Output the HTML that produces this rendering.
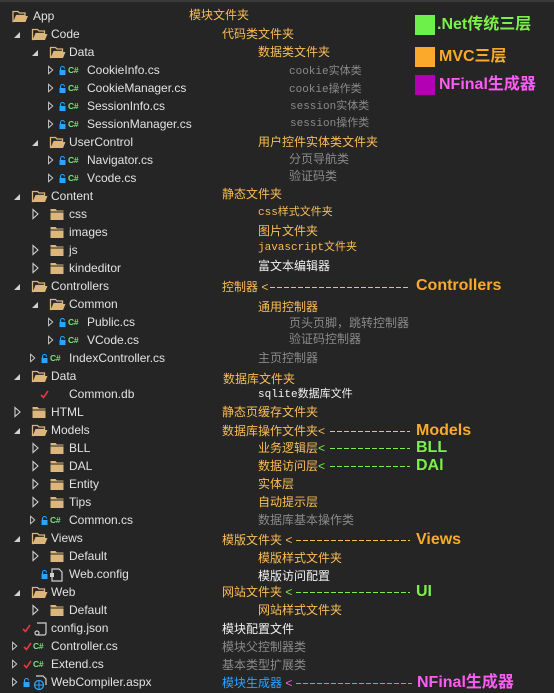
<!DOCTYPE html>
<html><head><meta charset="utf-8">
<style>
html,body{margin:0;padding:0}
body{width:554px;height:693px;background:#252526;position:relative;overflow:hidden;font-family:"Liberation Sans","Noto Sans CJK SC",sans-serif;border-top:2px solid #3a3a3c;box-sizing:border-box}
.r{position:absolute;height:18px;line-height:18px;display:flex;align-items:center;color:#e2e2e2;font-size:12px;white-space:nowrap}
.ex{width:18px;height:18px;position:relative;flex:none}
.ex:after{content:"";position:absolute;left:3px;top:7px;border-left:6px solid transparent;border-bottom:6px solid #d0d0d0}
.co{width:21px;height:18px;flex:none}
.co12{width:15px;height:18px;flex:none}
.sp{flex:none}
.fd{width:22px;height:18px;flex:none}
.lk{width:7px;height:18px;flex:none}
.cs{width:21px;height:18px;flex:none;color:#7ee07e;font-size:8.5px;font-weight:bold;line-height:18px;letter-spacing:-0.3px}
.a{position:absolute;font-size:12px;line-height:16px;white-space:nowrap;color:#fbbd55;font-family:"Liberation Sans","WenQuanYi Zen Hei",sans-serif}
.g{color:#8a8a8a}.w{color:#f2f2f2}.b{color:#2ba3ff}
.m{font-family:"Liberation Mono","WenQuanYi Zen Hei",monospace;font-size:11px}
.dash{position:absolute;height:1px}
.big{position:absolute;font-weight:bold;font-size:16px;line-height:18px;font-family:"Liberation Sans","Noto Sans CJK SC",sans-serif}
.sq{position:absolute;width:20px;height:20px}
</style></head><body>
<svg width="0" height="0" style="position:absolute">
<defs>
<symbol id="fo" viewBox="0 0 19 18"><path d="M2 4.5h5l1.5 1.5H14v2.5H5.5L3 14.5H2z" fill="none" stroke="#dcb67a" stroke-width="1.3"/><path d="M5 9h12l-2.5 6H2.5z" fill="#dcb67a"/></symbol>
<symbol id="fc" viewBox="0 0 19 18"><path d="M2 4h5l1.5 1.5H15V15H2z" fill="#dcb67a"/><path d="M2 7h13" stroke="#252526"/></symbol>
<symbol id="tr" viewBox="0 0 18 18"><path d="M5.5 4.5L10.5 9L5.5 13.5z" fill="none" stroke="#d0d0d0" stroke-width="1.1"/></symbol>
<symbol id="lk" viewBox="0 0 7 18"><path d="M1.5 9V7.5a2 2 0 0 1 4 0" fill="none" stroke="#2ba3ff" stroke-width="1.1"/><rect x="0.5" y="9" width="6" height="5" fill="#2ba3ff"/></symbol>
<symbol id="ck" viewBox="0 0 10 18"><path d="M1 10l2.5 2.5L8 6" fill="none" stroke="#e23b3b" stroke-width="1.6"/></symbol>
</defs></svg>

<!-- tree -->
<div class="r" style="top:5px;left:11px"><svg style="width:19px;height:18px"><use href="#fo"/></svg><span class="sp" style="width:3px"></span>App</div>
<div class="r" style="top:23px;left:11px"><span class="ex"></span><svg class="fd"><use href="#fo"/></svg>Code</div>
<div class="r" style="top:41px;left:29px"><span class="ex"></span><svg class="fd"><use href="#fo"/></svg>Data</div>
<div class="r" style="top:59px;left:44px"><svg class="co12"><use href="#tr"/></svg><svg class="lk"><use href="#lk"/></svg><span class="cs">&nbsp;C#</span>CookieInfo.cs</div>
<div class="r" style="top:77px;left:44px"><svg class="co12"><use href="#tr"/></svg><svg class="lk"><use href="#lk"/></svg><span class="cs">&nbsp;C#</span>CookieManager.cs</div>
<div class="r" style="top:95px;left:44px"><svg class="co12"><use href="#tr"/></svg><svg class="lk"><use href="#lk"/></svg><span class="cs">&nbsp;C#</span>SessionInfo.cs</div>
<div class="r" style="top:113px;left:44px"><svg class="co12"><use href="#tr"/></svg><svg class="lk"><use href="#lk"/></svg><span class="cs">&nbsp;C#</span>SessionManager.cs</div>
<div class="r" style="top:131px;left:29px"><span class="ex"></span><svg class="fd"><use href="#fo"/></svg>UserControl</div>
<div class="r" style="top:149px;left:44px"><svg class="co12"><use href="#tr"/></svg><svg class="lk"><use href="#lk"/></svg><span class="cs">&nbsp;C#</span>Navigator.cs</div>
<div class="r" style="top:167px;left:44px"><svg class="co12"><use href="#tr"/></svg><svg class="lk"><use href="#lk"/></svg><span class="cs">&nbsp;C#</span>Vcode.cs</div>
<div class="r" style="top:185px;left:11px"><span class="ex"></span><svg class="fd"><use href="#fo"/></svg>Content</div>
<div class="r" style="top:203px;left:26px"><svg class="co"><use href="#tr"/></svg><svg class="fd"><use href="#fc"/></svg>css</div>
<div class="r" style="top:221px;left:47px"><svg class="fd"><use href="#fc"/></svg>images</div>
<div class="r" style="top:239px;left:26px"><svg class="co"><use href="#tr"/></svg><svg class="fd"><use href="#fc"/></svg>js</div>
<div class="r" style="top:257px;left:26px"><svg class="co"><use href="#tr"/></svg><svg class="fd"><use href="#fc"/></svg>kindeditor</div>
<div class="r" style="top:275px;left:11px"><span class="ex"></span><svg class="fd"><use href="#fo"/></svg>Controllers</div>
<div class="r" style="top:293px;left:29px"><span class="ex"></span><svg class="fd"><use href="#fo"/></svg>Common</div>
<div class="r" style="top:311px;left:44px"><svg class="co12"><use href="#tr"/></svg><svg class="lk"><use href="#lk"/></svg><span class="cs">&nbsp;C#</span>Public.cs</div>
<div class="r" style="top:329px;left:44px"><svg class="co12"><use href="#tr"/></svg><svg class="lk"><use href="#lk"/></svg><span class="cs">&nbsp;C#</span>VCode.cs</div>
<div class="r" style="top:347px;left:26px"><svg class="co12"><use href="#tr"/></svg><svg class="lk"><use href="#lk"/></svg><span class="cs">&nbsp;C#</span>IndexController.cs</div>
<div class="r" style="top:365px;left:11px"><span class="ex"></span><svg class="fd"><use href="#fo"/></svg>Data</div>
<div class="r" style="top:383px;left:40px"><svg style="width:10px;height:18px"><use href="#ck"/></svg><span class="sp" style="width:19px"></span>Common.db</div>
<div class="r" style="top:401px;left:8px"><svg class="co"><use href="#tr"/></svg><svg class="fd"><use href="#fc"/></svg>HTML</div>
<div class="r" style="top:419px;left:11px"><span class="ex"></span><svg class="fd"><use href="#fo"/></svg>Models</div>
<div class="r" style="top:437px;left:26px"><svg class="co"><use href="#tr"/></svg><svg class="fd"><use href="#fc"/></svg>BLL</div>
<div class="r" style="top:455px;left:26px"><svg class="co"><use href="#tr"/></svg><svg class="fd"><use href="#fc"/></svg>DAL</div>
<div class="r" style="top:473px;left:26px"><svg class="co"><use href="#tr"/></svg><svg class="fd"><use href="#fc"/></svg>Entity</div>
<div class="r" style="top:491px;left:26px"><svg class="co"><use href="#tr"/></svg><svg class="fd"><use href="#fc"/></svg>Tips</div>
<div class="r" style="top:509px;left:26px"><svg class="co12"><use href="#tr"/></svg><svg class="lk"><use href="#lk"/></svg><span class="cs">&nbsp;C#</span>Common.cs</div>
<div class="r" style="top:527px;left:11px"><span class="ex"></span><svg class="fd"><use href="#fo"/></svg>Views</div>
<div class="r" style="top:545px;left:26px"><svg class="co"><use href="#tr"/></svg><svg class="fd"><use href="#fc"/></svg>Default</div>
<div class="r" style="top:563px;left:41px"><svg class="lk"><use href="#lk"/></svg><svg style="width:21px;height:18px"><path d="M4 4h7l3 3v9H4z" fill="none" stroke="#d0d0d0" stroke-width="1.2"/><path d="M2 8h4v4H2z" fill="#d0d0d0"/></svg>Web.config</div>
<div class="r" style="top:581px;left:11px"><span class="ex"></span><svg class="fd"><use href="#fo"/></svg>Web</div>
<div class="r" style="top:599px;left:26px"><svg class="co"><use href="#tr"/></svg><svg class="fd"><use href="#fc"/></svg>Default</div>
<div class="r" style="top:617px;left:22px"><svg style="width:10px;height:18px"><use href="#ck"/></svg><svg style="width:19px;height:18px"><path d="M5 4h9v10a2 2 0 0 1-2 2H6" fill="none" stroke="#d0d0d0" stroke-width="1.2"/><circle cx="5" cy="14" r="2" fill="none" stroke="#d0d0d0" stroke-width="1.2"/></svg>config.json</div>
<div class="r" style="top:635px;left:8px"><svg class="co12"><use href="#tr"/></svg><svg style="width:10px;height:18px"><use href="#ck"/></svg><span class="cs" style="width:18px">C#</span>Controller.cs</div>
<div class="r" style="top:653px;left:8px"><svg class="co12"><use href="#tr"/></svg><svg style="width:10px;height:18px"><use href="#ck"/></svg><span class="cs" style="width:18px">C#</span>Extend.cs</div>
<div class="r" style="top:671px;left:8px"><svg class="co12"><use href="#tr"/></svg><svg class="lk"><use href="#lk"/></svg><svg style="width:21px;height:18px"><path d="M6 3h7l3 3v6" fill="none" stroke="#d0d0d0" stroke-width="1.2"/><circle cx="9" cy="12" r="4.5" fill="none" stroke="#2ba3ff" stroke-width="1.3"/><path d="M4.5 12h9M9 7.5v9" stroke="#2ba3ff"/></svg>WebCompiler.aspx</div>

<!-- annotations -->
<div class="a" style="left:189px;top:5px">模块文件夹</div>
<div class="a" style="left:222px;top:24px">代码类文件夹</div>
<div class="a" style="left:258px;top:42px">数据类文件夹</div>
<div class="a g m" style="left:289px;top:62px">cookie实体类</div>
<div class="a g m" style="left:289px;top:80px">cookie操作类</div>
<div class="a g m" style="left:290px;top:97px">session实体类</div>
<div class="a g m" style="left:290px;top:114px">session操作类</div>
<div class="a" style="left:258px;top:132px">用户控件实体类文件夹</div>
<div class="a g" style="left:289px;top:149px">分页导航类</div>
<div class="a g" style="left:289px;top:166px">验证码类</div>
<div class="a" style="left:222px;top:184px">静态文件夹</div>
<div class="a m" style="left:258px;top:203px">css样式文件夹</div>
<div class="a" style="left:258px;top:221px">图片文件夹</div>
<div class="a m" style="left:258px;top:238px">javascript文件夹</div>
<div class="a w" style="left:258px;top:256px">富文本编辑器</div>
<div class="a" style="left:222px;top:277px">控制器 &lt;</div>
<div class="dash" style="left:270px;top:285px;width:140px;background:repeating-linear-gradient(90deg,#fbbd55 0 5px,transparent 5px 7px)"></div>
<div class="big" style="left:416px;top:275px;color:#fbaa2a">Controllers</div>
<div class="a" style="left:258px;top:297px">通用控制器</div>
<div class="a g" style="left:289px;top:313px">页头页脚，跳转控制器</div>
<div class="a g" style="left:289px;top:329px">验证码控制器</div>
<div class="a g" style="left:258px;top:348px">主页控制器</div>
<div class="a" style="left:223px;top:369px">数据库文件夹</div>
<div class="a w m" style="left:258px;top:385px">sqlite数据库文件</div>
<div class="a" style="left:222px;top:402px">静态页缓存文件夹</div>
<div class="a" style="left:222px;top:421px">数据库操作文件夹&lt;</div>
<div class="dash" style="left:330px;top:429px;width:80px;background:repeating-linear-gradient(90deg,#fbbd55 0 5px,transparent 5px 7px)"></div>
<div class="big" style="left:416px;top:420px;color:#fbaa2a">Models</div>
<div class="a" style="left:258px;top:438px">业务逻辑层<span style="color:#7cf04a">&lt;</span></div>
<div class="dash" style="left:330px;top:446px;width:80px;background:repeating-linear-gradient(90deg,#7cf04a 0 5px,transparent 5px 7px)"></div>
<div class="big" style="left:416px;top:437px;color:#7cf04a">BLL</div>
<div class="a" style="left:258px;top:456px">数据访问层<span style="color:#7cf04a">&lt;</span></div>
<div class="dash" style="left:330px;top:464px;width:80px;background:repeating-linear-gradient(90deg,#7cf04a 0 5px,transparent 5px 7px)"></div>
<div class="big" style="left:416px;top:455px;color:#7cf04a">DAl</div>
<div class="a" style="left:258px;top:474px">实体层</div>
<div class="a" style="left:258px;top:492px">自动提示层</div>
<div class="a g" style="left:258px;top:510px">数据库基本操作类</div>
<div class="a" style="left:222px;top:530px">模版文件夹 &lt;</div>
<div class="dash" style="left:296px;top:538px;width:114px;background:repeating-linear-gradient(90deg,#fbbd55 0 5px,transparent 5px 7px)"></div>
<div class="big" style="left:416px;top:529px;color:#fbaa2a">Views</div>
<div class="a" style="left:258px;top:548px">模版样式文件夹</div>
<div class="a w" style="left:258px;top:566px">模版访问配置</div>
<div class="a" style="left:222px;top:582px">网站文件夹 <span style="color:#7cf04a">&lt;</span></div>
<div class="dash" style="left:296px;top:590px;width:114px;background:repeating-linear-gradient(90deg,#7cf04a 0 5px,transparent 5px 7px)"></div>
<div class="big" style="left:416px;top:581px;color:#7cf04a">UI</div>
<div class="a" style="left:258px;top:600px">网站样式文件夹</div>
<div class="a w" style="left:222px;top:619px">模块配置文件</div>
<div class="a g" style="left:222px;top:637px">模块父控制器类</div>
<div class="a g" style="left:222px;top:655px">基本类型扩展类</div>
<div class="a b" style="left:222px;top:673px">模块生成器 <span style="color:#ff5cf5">&lt;</span></div>
<div class="dash" style="left:296px;top:681px;width:116px;background:repeating-linear-gradient(90deg,#ff5cf5 0 5px,transparent 5px 7px)"></div>
<div class="big" style="left:417px;top:672px;color:#ff5cf5">NFinal生成器</div>

<!-- legend -->
<div class="sq" style="left:415px;top:13px;background:#6df04a"></div>
<div class="big" style="left:437px;top:14px;color:#7cf04a">.Net传统三层</div>
<div class="sq" style="left:415px;top:45px;background:#fba92a"></div>
<div class="big" style="left:439px;top:46px;color:#fba92a">MVC三层</div>
<div class="sq" style="left:415px;top:73px;background:#b400b4"></div>
<div class="big" style="left:439px;top:74px;color:#ff5cf5">NFinal生成器</div>
</body></html>
